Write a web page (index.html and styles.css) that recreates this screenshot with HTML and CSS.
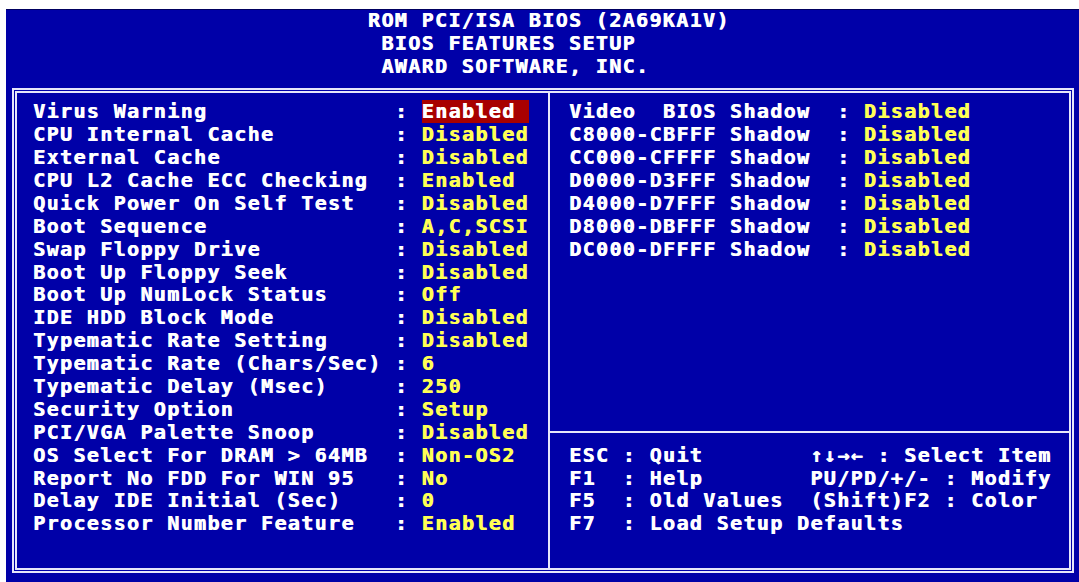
FILE: index.html
```html
<!DOCTYPE html>
<html lang="en">
<head>
<meta charset="utf-8">
<title>BIOS Features Setup</title>
<link rel="stylesheet" href="styles.css">
</head>
<body>
<div class="screen">
  <header class="hdr">
    <div class="hdr-line hdr-first">ROM PCI/ISA BIOS (2A69KA1V)</div>
    <div class="hdr-line">BIOS FEATURES SETUP</div>
    <div class="hdr-line">AWARD SOFTWARE, INC.</div>
  </header>
  <main class="box">
    <section class="pane-left">
      <div class="row"><span class="lbl">Virus Warning</span><span class="col">:</span><span class="val sel">Enabled</span></div>
      <div class="row"><span class="lbl">CPU Internal Cache</span><span class="col">:</span><span class="val">Disabled</span></div>
      <div class="row"><span class="lbl">External Cache</span><span class="col">:</span><span class="val">Disabled</span></div>
      <div class="row"><span class="lbl">CPU L2 Cache ECC Checking</span><span class="col">:</span><span class="val">Enabled</span></div>
      <div class="row"><span class="lbl">Quick Power On Self Test</span><span class="col">:</span><span class="val">Disabled</span></div>
      <div class="row"><span class="lbl">Boot Sequence</span><span class="col">:</span><span class="val">A,C,SCSI</span></div>
      <div class="row"><span class="lbl">Swap Floppy Drive</span><span class="col">:</span><span class="val">Disabled</span></div>
      <div class="row"><span class="lbl">Boot Up Floppy Seek</span><span class="col">:</span><span class="val">Disabled</span></div>
      <div class="row"><span class="lbl">Boot Up NumLock Status</span><span class="col">:</span><span class="val">Off</span></div>
      <div class="row"><span class="lbl">IDE HDD Block Mode</span><span class="col">:</span><span class="val">Disabled</span></div>
      <div class="row"><span class="lbl">Typematic Rate Setting</span><span class="col">:</span><span class="val">Disabled</span></div>
      <div class="row"><span class="lbl">Typematic Rate (Chars/Sec)</span><span class="col">:</span><span class="val">6</span></div>
      <div class="row"><span class="lbl">Typematic Delay (Msec)</span><span class="col">:</span><span class="val">250</span></div>
      <div class="row"><span class="lbl">Security Option</span><span class="col">:</span><span class="val">Setup</span></div>
      <div class="row"><span class="lbl">PCI/VGA Palette Snoop</span><span class="col">:</span><span class="val">Disabled</span></div>
      <div class="row"><span class="lbl">OS Select For DRAM &gt; 64MB</span><span class="col">:</span><span class="val">Non-OS2</span></div>
      <div class="row"><span class="lbl">Report No FDD For WIN 95</span><span class="col">:</span><span class="val">No</span></div>
      <div class="row"><span class="lbl">Delay IDE Initial (Sec)</span><span class="col">:</span><span class="val">0</span></div>
      <div class="row"><span class="lbl">Processor Number Feature</span><span class="col">:</span><span class="val">Enabled</span></div>
    </section>
    <section class="pane-right">
      <div class="shadows">
        <div class="row row-r"><span class="lbl">Video  BIOS Shadow</span><span class="col">:</span><span class="val">Disabled</span></div>
        <div class="row row-r"><span class="lbl">C8000-CBFFF Shadow</span><span class="col">:</span><span class="val">Disabled</span></div>
        <div class="row row-r"><span class="lbl">CC000-CFFFF Shadow</span><span class="col">:</span><span class="val">Disabled</span></div>
        <div class="row row-r"><span class="lbl">D0000-D3FFF Shadow</span><span class="col">:</span><span class="val">Disabled</span></div>
        <div class="row row-r"><span class="lbl">D4000-D7FFF Shadow</span><span class="col">:</span><span class="val">Disabled</span></div>
        <div class="row row-r"><span class="lbl">D8000-DBFFF Shadow</span><span class="col">:</span><span class="val">Disabled</span></div>
        <div class="row row-r"><span class="lbl">DC000-DFFFF Shadow</span><span class="col">:</span><span class="val">Disabled</span></div>
      </div>
      <div class="help">
        <div class="hrow"><span class="key">ESC</span><span class="col">:</span><span class="desc">Quit</span><span class="nav">↑↓→← : Select Item</span></div>
        <div class="hrow"><span class="key">F1</span><span class="col">:</span><span class="desc">Help</span><span class="nav">PU/PD/+/- : Modify</span></div>
        <div class="hrow"><span class="key">F5</span><span class="col">:</span><span class="desc">Old Values</span><span class="nav">(Shift)F2 : Color</span></div>
        <div class="hrow"><span class="key">F7</span><span class="col">:</span><span class="desc desc-wide">Load Setup Defaults</span></div>
      </div>
    </section>
  </main>
</div>
</body>
</html>
```
FILE: styles.css
```css
:root {
  --cw: 13.4px;
  --rh: 22.9px;
  --blue: #0000a8;
  --white: #ffffff;
  --yellow: #ffff55;
  --red: #a80000;
  --line: #e6e6fa;
}

html, body {
  margin: 0;
  padding: 0;
  background: #ffffff;
}

.screen {
  box-sizing: border-box;
  margin: 9px 0 0 6px;
  width: 1073px;
  height: 573px;
  background: var(--blue);
  border-top: 1px solid #000060;
  color: var(--white);
  font-family: "DejaVu Sans Mono", "Liberation Mono", monospace;
  font-weight: bold;
  font-size: 20px;
  letter-spacing: 1.36px;
  line-height: var(--rh);
  text-shadow: 0.7px 0 0 currentColor;
  overflow: hidden;
}

.hdr {
  margin-top: -1px;
}

.hdr-line,
.lbl,
.col,
.val,
.key,
.desc,
.nav {
  white-space: pre;
}

.hdr-line {
  height: var(--rh);
  padding-left: calc(28 * var(--cw));
}

.hdr-first {
  padding-left: calc(27 * var(--cw));
}

.box {
  box-sizing: border-box;
  margin: 10px 0 0 6px;
  width: 1062px;
  height: 485px;
  border: 5px double var(--line);
  display: flex;
}

.pane-left {
  box-sizing: border-box;
  width: 533px;
  border-right: 2px solid var(--line);
  padding: 7.6px 0 0 16px;
}

.row {
  display: grid;
  grid-template-columns: calc(27 * var(--cw)) calc(2 * var(--cw)) calc(8 * var(--cw));
  height: var(--rh);
}

.row-r {
  grid-template-columns: calc(20 * var(--cw)) calc(2 * var(--cw)) calc(8 * var(--cw));
}

.val {
  color: var(--yellow);
}

.val.sel {
  background: var(--red);
  color: var(--white);
}

.pane-right {
  flex: 1;
  display: flex;
  flex-direction: column;
}

.shadows {
  box-sizing: border-box;
  height: 338.6px;
  padding: 7.6px 0 0 19px;
}

.help {
  flex: 1;
  border-top: 2px solid var(--line);
  padding: 10.45px 0 0 19px;
}

.hrow {
  display: grid;
  grid-template-columns: calc(4 * var(--cw)) calc(2 * var(--cw)) calc(12 * var(--cw)) auto;
  height: var(--rh);
}

.desc-wide {
  grid-column: 3 / 5;
}
```
